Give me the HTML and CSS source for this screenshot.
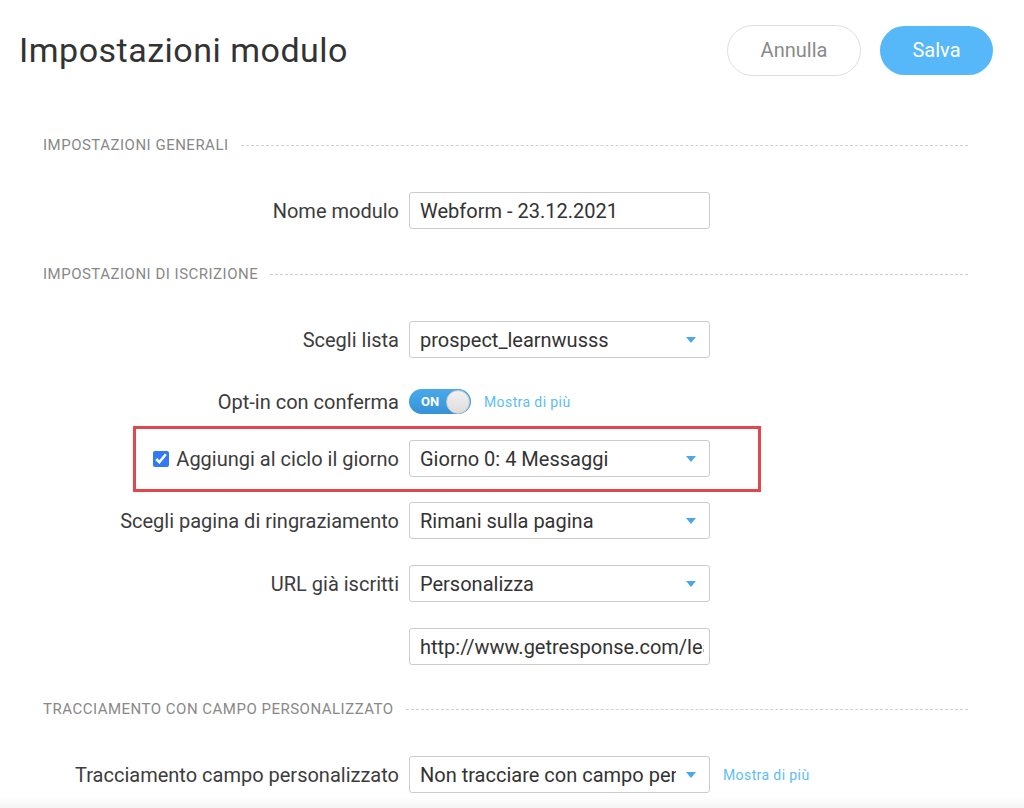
FILE: index.html
```html
<!DOCTYPE html>
<html lang="it">
<head>
    <meta charset="UTF-8">
    <meta name="viewport" content="width=device-width, initial-scale=1.0">
    <title>Impostazioni modulo</title>
    <link rel="stylesheet" href="styles.css">
</head>
<body>
    <div class="top">
        <h1>Impostazioni modulo</h1>
        <div class="azioni">
            <button type="button" class="btn btn-annulla">Annulla</button>
            <button type="button" class="btn btn-salva">Salva</button>
        </div>
    </div>

    <div class="sezione">Impostazioni generali</div>

    <div class="riga riga-prima">
        <label class="etichetta" for="nome">Nome modulo</label>
        <input class="campo" type="text" id="nome" value="Webform - 23.12.2021">
    </div>

    <div class="sezione">Impostazioni di iscrizione</div>

    <div class="riga riga-prima">
        <span class="etichetta">Scegli lista</span>
        <div class="tendina"><span class="tendina-testo">prospect_learnwusss</span><span class="freccia"></span></div>
    </div>

    <div class="riga riga-toggle">
        <span class="etichetta">Opt-in con conferma</span>
        <div class="toggle"><span class="toggle-on">ON</span><span class="toggle-pallino"></span></div>
        <a class="mostra" href="#">Mostra di più</a>
    </div>

    <div class="evidenzia">
        <div class="riga">
            <label class="etichetta etichetta-check"><input type="checkbox" checked> Aggiungi al ciclo il giorno</label>
            <div class="tendina"><span class="tendina-testo">Giorno 0: 4 Messaggi</span><span class="freccia"></span></div>
        </div>
    </div>

    <div class="riga riga-dopo-box">
        <span class="etichetta">Scegli pagina di ringraziamento</span>
        <div class="tendina"><span class="tendina-testo">Rimani sulla pagina</span><span class="freccia"></span></div>
    </div>

    <div class="riga">
        <span class="etichetta">URL già iscritti</span>
        <div class="tendina"><span class="tendina-testo">Personalizza</span><span class="freccia"></span></div>
    </div>

    <div class="riga">
        <span class="etichetta"></span>
        <input class="campo" type="text" value="http://www.getresponse.com/learnwusss/iscritto">
    </div>

    <div class="sezione sezione-ultima">Tracciamento con campo personalizzato</div>

    <div class="riga riga-prima">
        <span class="etichetta">Tracciamento campo personalizzato</span>
        <div class="tendina"><span class="tendina-testo">Non tracciare con campo personalizzato</span><span class="freccia"></span></div>
        <a class="mostra" href="#">Mostra di più</a>
    </div>

    <div class="sfumatura"></div>
</body>
</html>
```

FILE: styles.css
```css
body {
    margin: 0;
    font-family: Roboto, "Liberation Sans", Arial, sans-serif;
    color: #333;
    background: #fff;
    overflow: hidden;
}
.top {
    height: 100px;
    display: flex;
    align-items: center;
    justify-content: space-between;
    padding: 0 31px 0 19px;
}
h1 {
    margin: 0;
    font-size: 34px;
    font-weight: 400;
    letter-spacing: 0.5px;
    color: #333;
}
.azioni {
    display: flex;
    align-items: center;
    gap: 19px;
}
.btn {
    font-family: inherit;
    font-size: 20px;
    height: 51px;
    border-radius: 26px;
    cursor: pointer;
}
.btn-annulla {
    width: 134px;
    background: #fff;
    color: #8a8a8a;
    border: 1px solid #dedede;
}
.btn-salva {
    width: 113px;
    height: 49px;
    background: #56b8f8;
    color: #fff;
    border: none;
}
.sezione {
    display: flex;
    align-items: center;
    margin: 36px 56px 0 43px;
    font-size: 15px;
    line-height: 18px;
    letter-spacing: 0.5px;
    text-transform: uppercase;
    color: #888;
}
.sezione::after {
    content: "";
    flex: 1;
    margin-left: 12px;
    border-top: 1px dashed #d0d0d0;
}
.sezione-ultima {
    margin-top: 35px;
}
.riga {
    display: flex;
    align-items: center;
    gap: 10px;
    min-height: 37px;
    margin-top: 26px;
    padding-left: 43px;
}
.riga-prima {
    margin-top: 38px;
}
.riga-toggle {
    margin-top: 25px;
}
.riga-dopo-box {
    margin-top: 10px;
}
.etichetta {
    width: 356px;
    text-align: right;
    font-size: 20px;
    color: #3c3c3c;
}
.campo {
    box-sizing: border-box;
    width: 301px;
    height: 37px;
    margin: 0;
    padding: 0 5px 0 10px;
    border: 1px solid #ccc;
    border-radius: 3px;
    font-family: inherit;
    font-size: 20px;
    color: #333;
}
.tendina {
    box-sizing: border-box;
    width: 301px;
    height: 37px;
    display: flex;
    align-items: center;
    padding: 0 13px 0 10px;
    border: 1px solid #ccc;
    border-radius: 3px;
    font-size: 20px;
    color: #333;
}
.tendina-testo {
    flex: 1;
    overflow: hidden;
    white-space: nowrap;
    margin-right: 10px;
}
.freccia {
    width: 0;
    height: 0;
    border-left: 5px solid transparent;
    border-right: 5px solid transparent;
    border-top: 6px solid #4aa8e8;
}
.toggle {
    box-sizing: border-box;
    width: 62px;
    height: 25px;
    display: flex;
    align-items: center;
    justify-content: space-between;
    padding: 0 1px 0 12px;
    border-radius: 13px;
    background: linear-gradient(#4aaae8, #3592d8);
}
.toggle-on {
    color: #fff;
    font-size: 13px;
    font-weight: 700;
}
.toggle-pallino {
    box-sizing: border-box;
    width: 24px;
    height: 24px;
    border-radius: 50%;
    background: linear-gradient(#f2f2f2, #dcdcdc);
    border: 1px solid #c8c8c8;
}
.mostra {
    margin-left: 3px;
    font-size: 14px;
    letter-spacing: 0.4px;
    color: #5dbdf6;
    text-decoration: none;
}
.evidenzia {
    box-sizing: border-box;
    width: 628px;
    margin: 6px 0 0 133px;
    padding: 11px 0 12px;
    border: 3px solid #e3464c;
}
.evidenzia .riga {
    margin-top: 0;
    padding-left: 0;
}
.evidenzia .etichetta {
    width: 263px;
}
.etichetta-check {
    display: flex;
    align-items: center;
    justify-content: flex-end;
    gap: 7px;
}
.etichetta-check input {
    width: 16px;
    height: 16px;
    margin: 0;
    accent-color: #3478f6;
}
.sfumatura {
    height: 14px;
    margin-top: 3px;
    background: linear-gradient(#fff, #f2f2f2);
}
```
